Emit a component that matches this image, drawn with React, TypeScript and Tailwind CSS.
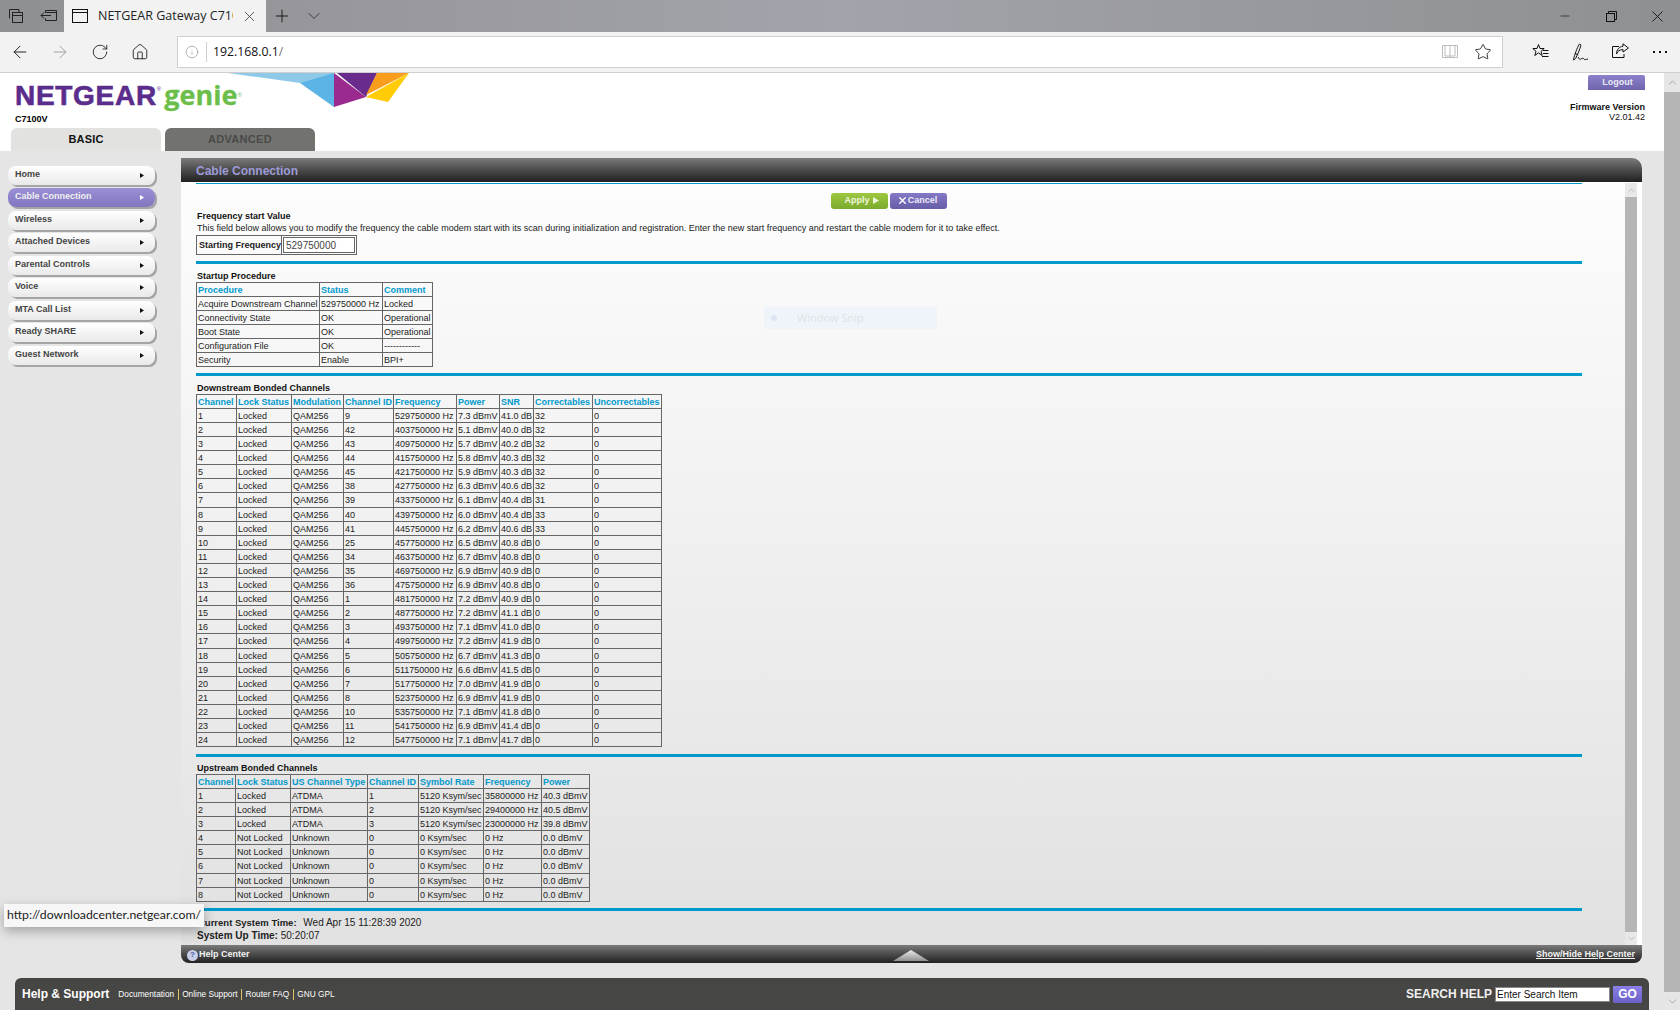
import React from "react";
import { ArrowLeft, ArrowRight, RotateCw, Home, Info, Star, X, Plus, ChevronDown, ChevronUp, Minus } from "lucide-react";

const menu = ["Home", "Cable Connection", "Wireless", "Attached Devices", "Parental Controls", "Voice", "MTA Call List", "Ready SHARE", "Guest Network"];

const startup = [
  ["Acquire Downstream Channel", "529750000 Hz", "Locked"],
  ["Connectivity State", "OK", "Operational"],
  ["Boot State", "OK", "Operational"],
  ["Configuration File", "OK", "------------"],
  ["Security", "Enable", "BPI+"],
];

const down: [number, string, string, string, string][] = [
  [9, "529750000", "7.3", "41.0", "32"], [42, "403750000", "5.1", "40.0", "32"], [43, "409750000", "5.7", "40.2", "32"],
  [44, "415750000", "5.8", "40.3", "32"], [45, "421750000", "5.9", "40.3", "32"], [38, "427750000", "6.3", "40.6", "32"],
  [39, "433750000", "6.1", "40.4", "31"], [40, "439750000", "6.0", "40.4", "33"], [41, "445750000", "6.2", "40.6", "33"],
  [25, "457750000", "6.5", "40.8", "0"], [34, "463750000", "6.7", "40.8", "0"], [35, "469750000", "6.9", "40.9", "0"],
  [36, "475750000", "6.9", "40.8", "0"], [1, "481750000", "7.2", "40.9", "0"], [2, "487750000", "7.2", "41.1", "0"],
  [3, "493750000", "7.1", "41.0", "0"], [4, "499750000", "7.2", "41.9", "0"], [5, "505750000", "6.7", "41.3", "0"],
  [6, "511750000", "6.6", "41.5", "0"], [7, "517750000", "7.0", "41.9", "0"], [8, "523750000", "6.9", "41.9", "0"],
  [10, "535750000", "7.1", "41.8", "0"], [11, "541750000", "6.9", "41.4", "0"], [12, "547750000", "7.1", "41.7", "0"],
];

const up = [
  ["1", "Locked", "ATDMA", "1", "5120 Ksym/sec", "35800000 Hz", "40.3 dBmV"],
  ["2", "Locked", "ATDMA", "2", "5120 Ksym/sec", "29400000 Hz", "40.5 dBmV"],
  ["3", "Locked", "ATDMA", "3", "5120 Ksym/sec", "23000000 Hz", "39.8 dBmV"],
  ["4", "Not Locked", "Unknown", "0", "0 Ksym/sec", "0 Hz", "0.0 dBmV"],
  ["5", "Not Locked", "Unknown", "0", "0 Ksym/sec", "0 Hz", "0.0 dBmV"],
  ["6", "Not Locked", "Unknown", "0", "0 Ksym/sec", "0 Hz", "0.0 dBmV"],
  ["7", "Not Locked", "Unknown", "0", "0 Ksym/sec", "0 Hz", "0.0 dBmV"],
  ["8", "Not Locked", "Unknown", "0", "0 Ksym/sec", "0 Hz", "0.0 dBmV"],
];

function DataTable({ widths, head, rows, tall = [] }: { widths: number[]; head: string[]; rows: string[][]; tall?: number[] }) {
  return (
    <table className="table-fixed border-collapse" style={{ width: widths.reduce((a, b) => a + b, 0) + 1 }}>
      <colgroup>
        {widths.map((w, i) => (
          <col key={i} style={{ width: w }} />
        ))}
      </colgroup>
      <thead>
        <tr className="h-[14px]">
          {head.map((h) => (
            <th key={h} className="border border-[#666] pl-[1px] py-0 pr-0 text-left text-[9px] font-bold text-[#0099cc] leading-[12px] whitespace-nowrap overflow-hidden">
              {h}
            </th>
          ))}
        </tr>
      </thead>
      <tbody>
        {rows.map((r, i) => (
          <tr key={i} style={{ height: tall.includes(i) ? 15 : 14 }}>
            {r.map((c, j) => (
              <td key={j} className="border border-[#666] pl-[1px] py-0 pr-0 text-[9px] text-[#222] leading-[12px] whitespace-nowrap overflow-hidden">
                {c}
              </td>
            ))}
          </tr>
        ))}
      </tbody>
    </table>
  );
}

const Rule = ({ className = "" }: { className?: string }) => <div className={`h-[3px] w-[1386px] bg-[#0099cc] ${className}`} />;

const Thin = { strokeWidth: 1.1 };

function TabsAsideIcon() {
  return (
    <svg width="16" height="16" viewBox="0 0 16 16" fill="none" stroke="#222" strokeWidth="1">
      <path d="M1.5 10.5V1.5h9.5V4" />
      <rect x="4.5" y="4.5" width="10" height="10" />
      <path d="M4.5 7.5h10" />
    </svg>
  );
}
function SetAsideIcon() {
  return (
    <svg width="17" height="14" viewBox="0 0 17 14" fill="none" stroke="#222" strokeWidth="1">
      <path d="M5.5 3.5V1.5h11v10h-11v-2" />
      <path d="M5.5 3.5h11" />
      <path d="M11 6.5H1M4 3.5l-3 3 3 3" />
    </svg>
  );
}
function WindowIcon() {
  return (
    <svg width="16" height="14" viewBox="0 0 16 14" fill="none" stroke="#111" strokeWidth="1">
      <rect x="0.5" y="0.5" width="15" height="13" />
      <path d="M0.5 3.5h15" />
    </svg>
  );
}
function RestoreIcon() {
  return (
    <svg width="11" height="11" viewBox="0 0 11 11" fill="none" stroke="#111" strokeWidth="1">
      <rect x="0.5" y="2.5" width="8" height="8" />
      <path d="M2.5 2.5V0.5h8v8H8.5" />
    </svg>
  );
}
function BookIcon() {
  return (
    <svg width="16" height="15" viewBox="0 0 16 15" fill="none" stroke="#bdbdbd" strokeWidth="1">
      <path d="M0.5 1.5h15v12h-15zM8 1.5v12M3 1.5V12h5M13 1.5V12H8" />
    </svg>
  );
}
function FavListIcon() {
  return (
    <svg width="17" height="17" viewBox="0 0 17 17" fill="none" stroke="#111" strokeWidth="1">
      <path d="M6.5 1.5l1.5 4h4.2L9 8.3l1.2 4.2-3.7-2.6-3.7 2.6L4 8.3.8 5.5H5z" />
      <path d="M11 7.5h5.5M11 10.5h5.5M10 13.5h6.5" />
    </svg>
  );
}
function PenIcon() {
  return (
    <svg width="17" height="18" viewBox="0 0 17 18" fill="none" stroke="#111" strokeWidth="1">
      <path d="M7.5 1C6 3 3.5 9 2 14.5L1.5 17 3.6 15.5C5.5 12 8 5.5 8.8 3 9 2 8.5 .8 7.5 1zM3 10.5l3.2 1.4" />
      <path d="M6 14c1 2 2 3 3 2s2-1 3 0 2 .5 4 0" />
    </svg>
  );
}
function ShareIcon() {
  return (
    <svg width="17" height="16" viewBox="0 0 17 16" fill="none" stroke="#111" strokeWidth="1">
      <path d="M7 3.5H.5v11H12V11" />
      <path d="M11 .8L16.4 5 11 9V6.6C8 6.5 5.5 8 4.5 11 4.5 7 7 3.6 11 3.3z" />
    </svg>
  );
}

function Logo() {
  return (
    <div className="-mt-[1px] flex items-start h-[28px] pl-[15px] whitespace-nowrap">
      <span className="text-[28px] leading-[28px] font-bold tracking-[0.7px] text-[#5a2d8c] [-webkit-text-stroke:0.6px_#5a2d8c]">NETGEAR</span>
      <span className="text-[6px] leading-[8px] text-[#5a2d8c] mt-[3px]">®</span>
      <span className="ml-[3px] -mt-[1px] text-[27px] leading-[28px] font-bold text-[#6cbe4a] font-['Open_Sans',sans-serif] [-webkit-text-stroke:0.3px_#6cbe4a]">genie</span>
      <span className="text-[6px] leading-[8px] text-[#6cbe4a] mt-[9px]">®</span>
    </div>
  );
}

function SideItem({ label, active }: { label: string; active?: boolean }) {
  return (
    <div
      className={`flex h-[19px] shrink-0 items-center justify-between rounded-[8px] pl-[7px] pr-[11px] text-[9px] font-bold shadow-[2px_2px_0_#a5a5a5] even:mb-[1px] ${
        active ? "bg-gradient-to-b from-[#9a90d6] to-[#8277bf] text-[#f0f0f0]" : "bg-gradient-to-b from-white to-[#e9e9e9] text-[#444]"
      }`}
    >
      <span className="-mt-[1px]">{label}</span>
      <svg width="4" height="5" viewBox="0 0 4 5">
        <path d="M0 0l4 2.5L0 5z" fill={active ? "#ffffff" : "#111111"} />
      </svg>
    </div>
  );
}

export default function App() {
  return (
    <div className="relative flex h-[1010px] w-[1680px] flex-col overflow-hidden bg-white font-['Liberation_Sans',Arial,sans-serif] text-[9px] text-black">
      {/* Browser tab strip */}
      <div className="flex h-[32px] items-center bg-gradient-to-r from-[#8f9093] via-[#a3a3ab] to-[#8e9092]">
        <div className="flex h-[32px] w-[32px] items-center justify-center"><TabsAsideIcon /></div>
        <div className="flex h-[32px] w-[32px] items-center justify-center"><SetAsideIcon /></div>
        <div className="flex h-[32px] w-[202px] items-center bg-[#f2f2f2] pl-[8px]">
          <WindowIcon />
          <span className="ml-[10px] w-[135px] overflow-hidden whitespace-nowrap font-['Open_Sans',sans-serif] text-[12.5px] text-[#222]">NETGEAR Gateway C7100V</span>
          <X size={17} {...Thin} className="ml-[8px] text-[#333]" />
        </div>
        <div className="flex h-[32px] w-[32px] items-center justify-center"><Plus size={20} {...Thin} className="text-[#111]" /></div>
        <div className="flex h-[32px] w-[32px] items-center justify-center"><ChevronDown size={20} {...Thin} className="text-[#333]" /></div>
        <div className="flex-1" />
        <div className="flex h-[32px] w-[46px] items-center justify-center"><Minus size={14} {...Thin} className="text-[#111]" /></div>
        <div className="flex h-[32px] w-[46px] items-center justify-center"><RestoreIcon /></div>
        <div className="flex h-[32px] w-[46px] items-center justify-center"><X size={19} {...Thin} className="text-[#111]" /></div>
      </div>

      {/* Browser toolbar */}
      <div className="flex h-[41px] items-center border-b border-[#cfcfcf] bg-[#f2f2f2] pb-[1px]">
        <div className="flex w-[40px] justify-center"><ArrowLeft size={20} {...Thin} className="text-[#111]" /></div>
        <div className="flex w-[40px] justify-center"><ArrowRight size={20} {...Thin} className="text-[#999]" /></div>
        <div className="flex w-[40px] justify-center"><RotateCw size={18} {...Thin} className="text-[#111]" /></div>
        <div className="flex w-[40px] justify-center"><Home size={18} {...Thin} className="text-[#111]" /></div>
        <div className="ml-[17px] flex h-[32px] w-[1326px] items-center border border-[#cfcfcf] bg-white">
          <div className="flex h-[20px] w-[29px] items-center justify-center border-r border-[#cfcfcf]">
            <Info size={14} strokeWidth={0.9} className="text-[#777]" />
          </div>
          <span className="ml-[6px] pt-[2px] font-['Open_Sans',sans-serif] text-[12.25px] text-[#111]">
            192.168.0.1<span className="text-[#777]">/</span>
          </span>
          <div className="flex-1" />
          <BookIcon />
          <Star size={18} {...Thin} className="ml-[16px] mr-[10px] text-[#111]" />
        </div>
        <div className="ml-[17px] flex">
          <div className="flex w-[40px] justify-center"><FavListIcon /></div>
          <div className="flex w-[40px] justify-center"><PenIcon /></div>
          <div className="flex w-[40px] justify-center"><ShareIcon /></div>
          <div className="flex w-[40px] items-center justify-center gap-[4px]">
            <span className="h-[2px] w-[2px] bg-[#111]" />
            <span className="h-[2px] w-[2px] bg-[#111]" />
            <span className="h-[2px] w-[2px] bg-[#111]" />
          </div>
        </div>
      </div>

      {/* Page */}
      <div className="flex flex-1">
        <div className="flex w-[1664px] flex-col bg-[#e5e5e5]">
          {/* Router header */}
          <div className="relative flex h-[78px] justify-between bg-white">
            <svg className="absolute left-[226px] top-0" width="186" height="36" viewBox="226 73 186 36">
              <path d="M228 73H334V83H300z" fill="#8ec9e8" />
              <path d="M334 73L300 83 334 107z" fill="#5bb4e5" />
              <path d="M334 73L366 97 334 107z" fill="#9b2a8e" />
              <path d="M337 73H377L366 97z" fill="#6a2c8c" />
              <path d="M377 73H409L366 95z" fill="#f99d1c" />
              <path d="M409 73L388 102 366 97z" fill="#ffcc05" />
            </svg>
            <div className="flex flex-col pt-[10px]">
              <Logo />
              <div className="ml-[15px] mt-[3px] text-[9px] font-bold leading-[12px]">C7100V</div>
              <div className="mt-auto ml-[11px] flex gap-[4px]">
                <div className="flex h-[23px] w-[150px] items-center justify-center rounded-t-[6px] bg-[#e2e3e1] text-[11px] font-bold tracking-[0.2px] text-[#111]">BASIC</div>
                <div className="flex h-[23px] w-[150px] items-center justify-center rounded-t-[6px] bg-[#72736f] text-[11px] font-bold tracking-[0.3px] text-[#4a4a4a]">ADVANCED</div>
              </div>
            </div>
            <div className="flex flex-col items-end pr-[19px] pt-[2px]">
              <div className="flex h-[15px] w-[57px] items-center justify-center rounded-t-[2px] bg-gradient-to-b from-[#8c82cc] to-[#6f65ad] pl-[2px] text-[9px] font-bold text-[#e8e8f0]">Logout</div>
              <div className="mt-[12px] text-right text-[9px] font-bold leading-[10px] text-[#111]">
                <div>Firmware Version</div>
                <div className="font-normal">V2.01.42</div>
              </div>
            </div>
          </div>

          {/* Body */}
          <div className="flex flex-1 pt-[7px]">
            <div className="mt-[8px] ml-[8px] flex h-[199px] w-[147px] flex-col gap-[3px]">
              {menu.map((m) => (
                <SideItem key={m} label={m} active={m === "Cable Connection"} />
              ))}
            </div>
            <div className="ml-[26px] flex h-[805px] w-[1461px] flex-col">
              {/* Panel header */}
              <div className="flex h-[24px] items-center rounded-tr-[10px] bg-gradient-to-b from-[#7b7b7b] to-[#202020] pl-[15px] pt-[1px] text-[12px] font-bold text-[#9c9ad6]">
                Cable Connection
              </div>
              <div className="flex h-[763px] bg-white pt-[1px]">
                <div className="flex w-[1444px] flex-col overflow-hidden bg-gradient-to-b from-[#fdfdfd] to-[#e1e1e1] pl-[15px]">
                  <div className="h-[1px] w-[1386px] bg-[#0099cc]" />
                  <div className="mt-[9px] flex h-[16px] w-[1385px] justify-center gap-[2px]">
                    <div className="flex w-[57px] items-center justify-center gap-[3px] rounded-[3px] bg-gradient-to-b from-[#9dc73f] to-[#7cab2e] pb-[1px] pl-[5px] font-bold text-[#eef6dc]">
                      Apply
                      <svg width="6" height="7" viewBox="0 0 6 7"><path d="M0 0l6 3.5L0 7z" fill="#eef6dc" /></svg>
                    </div>
                    <div className="flex w-[57px] items-center justify-center rounded-[3px] bg-gradient-to-b from-[#8379c6] to-[#675da8] pb-[1px] pr-[2px] font-bold text-[#eceaf8]">
                      <X size={11} strokeWidth={3} className="text-white" />
                      Cancel
                    </div>
                  </div>
                  <div className="mt-[1px] pl-[1px] font-bold leading-[12px] text-[#111]">Frequency start Value</div>
                  <div className="pl-[1px] leading-[12px] text-[#222]">
                    This field below allows you to modify the frequency the cable modem start with its scan during initialization and registration. Enter the new start frequency and restart the cable modem for it to take effect.
                  </div>
                  <div className="mt-[1px] flex h-[20px] w-[161px] border border-[#666]">
                    <div className="flex w-[85px] items-center justify-center whitespace-nowrap border-r border-[#666] pl-[2px] pt-[2px] font-bold text-[#222]">Starting Frequency</div>
                    <div className="ml-[1px] my-[1px] flex w-[72px] items-center border border-[#666] bg-white pl-[2px] text-[10px] text-[#444]">529750000</div>
                  </div>
                  <Rule className="mt-[6px]" />
                  <div className="mt-[6px] pl-[1px] font-bold leading-[12px] text-[#111]">Startup Procedure</div>
                  <DataTable widths={[123, 63, 50]} head={["Procedure", "Status", "Comment"]} rows={startup} />
                  <Rule className="mt-[6px]" />
                  <div className="mt-[6px] pl-[1px] font-bold leading-[12px] text-[#111]">Downstream Bonded Channels</div>
                  <DataTable
                    widths={[40, 55, 52, 50, 63, 43, 34, 59, 69]}
                    head={["Channel", "Lock Status", "Modulation", "Channel ID", "Frequency", "Power", "SNR", "Correctables", "Uncorrectables"]}
                    rows={down.map((d, i) => [String(i + 1), "Locked", "QAM256", String(d[0]), d[1] + " Hz", d[2] + " dBmV", d[3] + " dB", d[4], "0"])}
                    tall={[6, 16]}
                  />
                  <Rule className="mt-[7px]" />
                  <div className="mt-[5px] pl-[1px] font-bold leading-[12px] text-[#111]">Upstream Bonded Channels</div>
                  <DataTable
                    widths={[39, 55, 77, 51, 65, 58, 48]}
                    head={["Channel", "Lock Status", "US Channel Type", "Channel ID", "Symbol Rate", "Frequency", "Power"]}
                    rows={up}
                    tall={[5]}
                  />
                  <Rule className="mt-[6px]" />
                  <div className="mt-[6px] pl-[2px] text-[10px] leading-[12px] text-[#222]"><b className="mr-[4px] text-[9.5px]">Current System Time:</b> Wed Apr 15 11:28:39 2020</div>
                  <div className="mt-[1px] pl-[1px] text-[10px] leading-[12px] text-[#222]"><b>System Up Time:</b> 50:20:07</div>
                </div>
                <div className="flex w-[12px] flex-col">
                  <div className="flex h-[14px] items-center justify-center bg-[#e9e9e9]"><ChevronUp size={11} strokeWidth={1} className="text-[#888]" /></div>
                  <div className="flex-1 bg-[#b6b6b6]" />
                  <div className="flex h-[13px] items-center justify-center bg-[#e9e9e9]"><ChevronDown size={11} strokeWidth={1} className="text-[#888]" /></div>
                </div>
              </div>
              {/* Help bar */}
              <div className="relative flex h-[18px] items-center justify-between rounded-b-[8px] bg-gradient-to-b from-[#7b7b7b] to-[#222] pl-[6px] pr-[7px] pt-[2px] font-bold text-[#f2f2f2]">
                <div className="flex items-center gap-[1px]">
                  <span className="flex h-[11px] w-[11px] items-center justify-center rounded-full bg-[#c8cfe8] text-[8px] leading-none text-[#4b5aa0]">?</span>
                  Help Center
                </div>
                <svg className="absolute left-[712px] top-[5px]" width="36" height="11" viewBox="0 0 36 11">
                  <defs>
                    <linearGradient id="helpTri" x1="0" y1="0" x2="0" y2="1">
                      <stop offset="0" stopColor="#ececec" />
                      <stop offset="1" stopColor="#8f8f8f" />
                    </linearGradient>
                  </defs>
                  <path d="M18 0L36 11H0z" fill="url(#helpTri)" />
                </svg>
                <span className="underline">Show/Hide Help Center</span>
              </div>
            </div>
          </div>

          {/* Footer */}
          <div className="mx-[15px] flex h-[32px] items-center justify-between rounded-t-[6px] bg-[#464644] pl-[7px] pr-[7px] text-white">
            <div className="flex items-center">
              <span className="text-[12px] font-bold">Help &amp; Support</span>
              <span className="ml-[9px] text-[8.3px]">Documentation</span>
              <span className="mx-[3.5px] h-[11px] w-px bg-[#e0c060]" />
              <span className="text-[8.3px]">Online Support</span>
              <span className="mx-[3.5px] h-[11px] w-px bg-[#e0c060]" />
              <span className="text-[8.3px]">Router FAQ</span>
              <span className="mx-[3.5px] h-[11px] w-px bg-[#e0c060]" />
              <span className="text-[8.3px]">GNU GPL</span>
            </div>
            <div className="flex items-center">
              <span className="text-[12px] font-bold text-[#f0f0f0]">SEARCH HELP</span>
              <div className="ml-[3px] flex h-[15px] w-[115px] items-center border border-[#888] bg-white pl-[1px] text-[10px] text-[#111]">Enter Search Item</div>
              <div className="ml-[3px] flex h-[17px] w-[29px] items-center justify-center rounded-[1px] bg-gradient-to-b from-[#8b80e8] to-[#6a60c8] text-[12px] font-bold text-white">GO</div>
            </div>
          </div>
        </div>

        {/* Page scrollbar */}
        <div className="flex w-[16px] flex-col">
          <div className="flex h-[19px] items-center justify-center bg-[#e6e6e6]"><ChevronUp size={13} strokeWidth={1} className="text-[#777]" /></div>
          <div className="flex-1 bg-[#b5b5b5]" />
          <div className="flex h-[18px] items-center justify-center bg-[#e6e6e6]"><ChevronDown size={13} strokeWidth={1} className="text-[#777]" /></div>
        </div>
      </div>

      {/* Ghost of the snip tool */}
      <div className="absolute left-[764px] top-[307px] flex h-[22px] w-[173px] items-center bg-[#eff4fa] pl-[7px] font-['Open_Sans',sans-serif] text-[11px] text-[#e0e2e5]">
        <span className="h-[6px] w-[6px] rounded-full bg-[#dde6f2]" />
        <span className="ml-[20px]">Window Snip</span>
      </div>

      {/* Link tooltip */}
      <div className="absolute left-[4px] top-[904px] flex h-[23px] w-[200px] items-center bg-[#f7f7f7] pl-[3px] font-['Lato',sans-serif] text-[12.25px] text-[#222] shadow-[0_4px_12px_rgba(0,0,0,0.3)]">
        http://downloadcenter.netgear.com/
      </div>
    </div>
  );
}
